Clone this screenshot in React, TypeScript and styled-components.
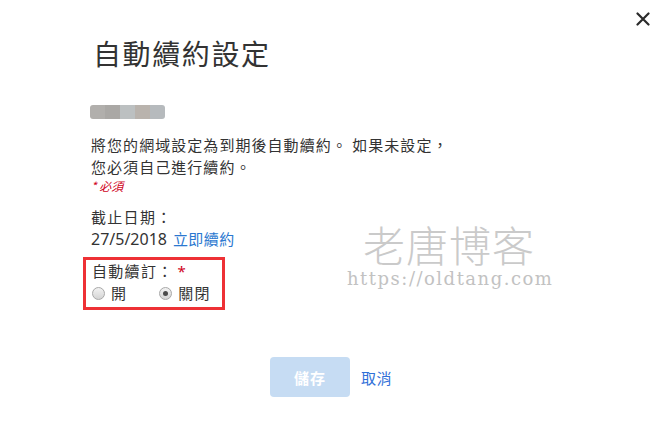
import React, { useState } from "react";
import styled, { createGlobalStyle } from "styled-components";

const GlobalStyle = createGlobalStyle`
  html, body { margin: 0; padding: 0; background: #ffffff; }
  body {
    font-family: "Noto Sans", "Noto Sans CJK TC", sans-serif;
    color: #333333;
  }
  * { box-sizing: border-box; }
`;

const Page = styled.div`
  position: relative;
  width: 662px;
  height: 426px;
  background: #ffffff;
  overflow: hidden;
`;

const CloseButton = styled.button`
  position: absolute;
  top: 10px;
  right: 10px;
  width: 18px;
  height: 18px;
  padding: 0;
  border: none;
  background: transparent;
  display: flex;
  align-items: center;
  justify-content: center;
  cursor: pointer;
`;

const Content = styled.div`
  display: flex;
  flex-direction: column;
  align-items: flex-start;
  padding: 33px 0 0 91px;
`;

const Title = styled.h1`
  margin: 0 0 0 2px;
  font-family: "Noto Sans CJK TC", sans-serif;
  font-weight: 400;
  font-size: 28px;
  line-height: 40px;
  letter-spacing: 1.6px;
  color: #333333;
`;

const BlurBar = styled.div`
  display: flex;
  margin: 32px 0 0 -1px;
  height: 14px;
  border-radius: 3px;
  overflow: hidden;
  filter: blur(0.4px);
`;

const BlurCell = styled.span<{ $c: string }>`
  width: 15px;
  height: 14px;
  background: ${(p) => p.$c};
`;

const Desc = styled.p`
  margin: 15px 0 0;
  font-family: "Noto Sans CJK TC", sans-serif;
  font-size: 15px;
  letter-spacing: 1.05px;
  line-height: 22px;
  color: #333333;
`;

const Required = styled.div`
  margin-top: -1px;
  font-family: "Noto Sans CJK TC", sans-serif;
  font-size: 12px;
  line-height: 18px;
  font-style: italic;
  color: #d0021b;
`;

const Label = styled.div`
  margin-top: 11px;
  font-family: "Noto Sans CJK TC", sans-serif;
  font-size: 15px;
  letter-spacing: 1.3px;
  line-height: 22px;
  color: #333333;
`;

const DateRow = styled.div`
  display: flex;
  align-items: baseline;
  gap: 6px;
  font-size: 16px;
  line-height: 22px;
  color: #333333;
`;

const Link = styled.a`
  font-family: "Noto Sans CJK TC", sans-serif;
  font-size: 15px;
  letter-spacing: 0.4px;
  color: #2b78d0;
  text-decoration: none;
  cursor: pointer;
`;

const Highlight = styled.div`
  margin: 7px 0 0 -8px;
  width: 142px;
  border: 3px solid #ee3135;
  padding: 0 0 3px 6px;
  display: flex;
  flex-direction: column;
`;

const FieldLabel = styled.div`
  font-family: "Noto Sans CJK TC", sans-serif;
  font-size: 15px;
  letter-spacing: 1.3px;
  line-height: 22px;
  color: #333333;
`;

const Star = styled.span`
  color: #d0021b;
  margin-left: 4px;
  font-family: "Noto Sans", sans-serif;
`;

const RadioRow = styled.div`
  display: flex;
  align-items: center;
  gap: 32px;
  height: 22px;
`;

const Option = styled.label`
  display: flex;
  align-items: center;
  gap: 6px;
  font-family: "Noto Sans CJK TC", sans-serif;
  font-size: 15px;
  letter-spacing: 1.3px;
  line-height: 22px;
  color: #333333;
  cursor: pointer;
`;

const RadioCircle = styled.span<{ $checked: boolean }>`
  width: 13px;
  height: 13px;
  border-radius: 50%;
  border: 1px solid #a8a8a8;
  background: linear-gradient(#f2f2f2, #d4d4d4);
  display: flex;
  align-items: center;
  justify-content: center;
  &::after {
    content: "";
    width: 5px;
    height: 5px;
    border-radius: 50%;
    background: ${(p) => (p.$checked ? "#4a4a4a" : "transparent")};
  }
`;

const Footer = styled.div`
  margin-top: 47px;
  display: flex;
  justify-content: center;
  align-items: center;
  gap: 11px;
`;

const SaveButton = styled.button`
  width: 80px;
  height: 40px;
  border: none;
  border-radius: 4px;
  background: #c6dcf3;
  color: #ffffff;
  font-family: "Noto Sans CJK TC", sans-serif;
  font-weight: 700;
  font-size: 15px;
  letter-spacing: 1px;
  cursor: default;
`;

const CancelLink = styled.a`
  font-family: "Noto Sans CJK TC", sans-serif;
  font-size: 15px;
  letter-spacing: 0.5px;
  color: #3070d8;
  cursor: pointer;
`;

const Watermark = styled.div`
  position: absolute;
  left: 347px;
  top: 222px;
  display: flex;
  flex-direction: column;
  align-items: flex-start;
  gap: 2px;
  pointer-events: none;
`;

const WatermarkTitle = styled.div`
  margin-left: 16px;
  font-family: "Noto Sans CJK SC", sans-serif;
  font-size: 42px;
  line-height: 44px;
  letter-spacing: 1px;
  font-weight: 300;
  color: #cacaca;
`;

const WatermarkUrl = styled.div`
  font-family: "DejaVu Serif", serif;
  font-size: 18px;
  line-height: 22px;
  letter-spacing: 1.5px;
  color: #c2c2c2;
`;

const blurColors = ["#b1afac", "#aaa8a5", "#bcc0c1", "#b9b3ad", "#b6babd"];

export default function App() {
  const [renew, setRenew] = useState<"on" | "off">("off");
  return (
    <>
      <GlobalStyle />
      <Page>
        <CloseButton aria-label="close">
          <svg width="14" height="14" viewBox="0 0 14 14">
            <path d="M1.5 1.5 L12.5 12.5 M12.5 1.5 L1.5 12.5" stroke="#2b2b2b" strokeWidth="2.2" strokeLinecap="round" />
          </svg>
        </CloseButton>
        <Content>
          <Title>自動續約設定</Title>
          <BlurBar>
            {blurColors.map((c, i) => (
              <BlurCell key={i} $c={c} />
            ))}
          </BlurBar>
          <Desc>
            將您的網域設定為到期後自動續約。 如果未設定，
            <br />
            您必須自己進行續約。
          </Desc>
          <Required>* 必須</Required>
          <Label>截止日期：</Label>
          <DateRow>
            <span>27/5/2018</span>
            <Link>立即續約</Link>
          </DateRow>
          <Highlight>
            <FieldLabel>
              自動續訂：<Star>*</Star>
            </FieldLabel>
            <RadioRow>
              <Option onClick={() => setRenew("on")}>
                <RadioCircle $checked={renew === "on"} />
                開
              </Option>
              <Option onClick={() => setRenew("off")}>
                <RadioCircle $checked={renew === "off"} />
                關閉
              </Option>
            </RadioRow>
          </Highlight>
        </Content>
        <Footer>
          <SaveButton>儲存</SaveButton>
          <CancelLink>取消</CancelLink>
        </Footer>
        <Watermark>
          <WatermarkTitle>老唐博客</WatermarkTitle>
          <WatermarkUrl>https://oldtang.com</WatermarkUrl>
        </Watermark>
      </Page>
    </>
  );
}
